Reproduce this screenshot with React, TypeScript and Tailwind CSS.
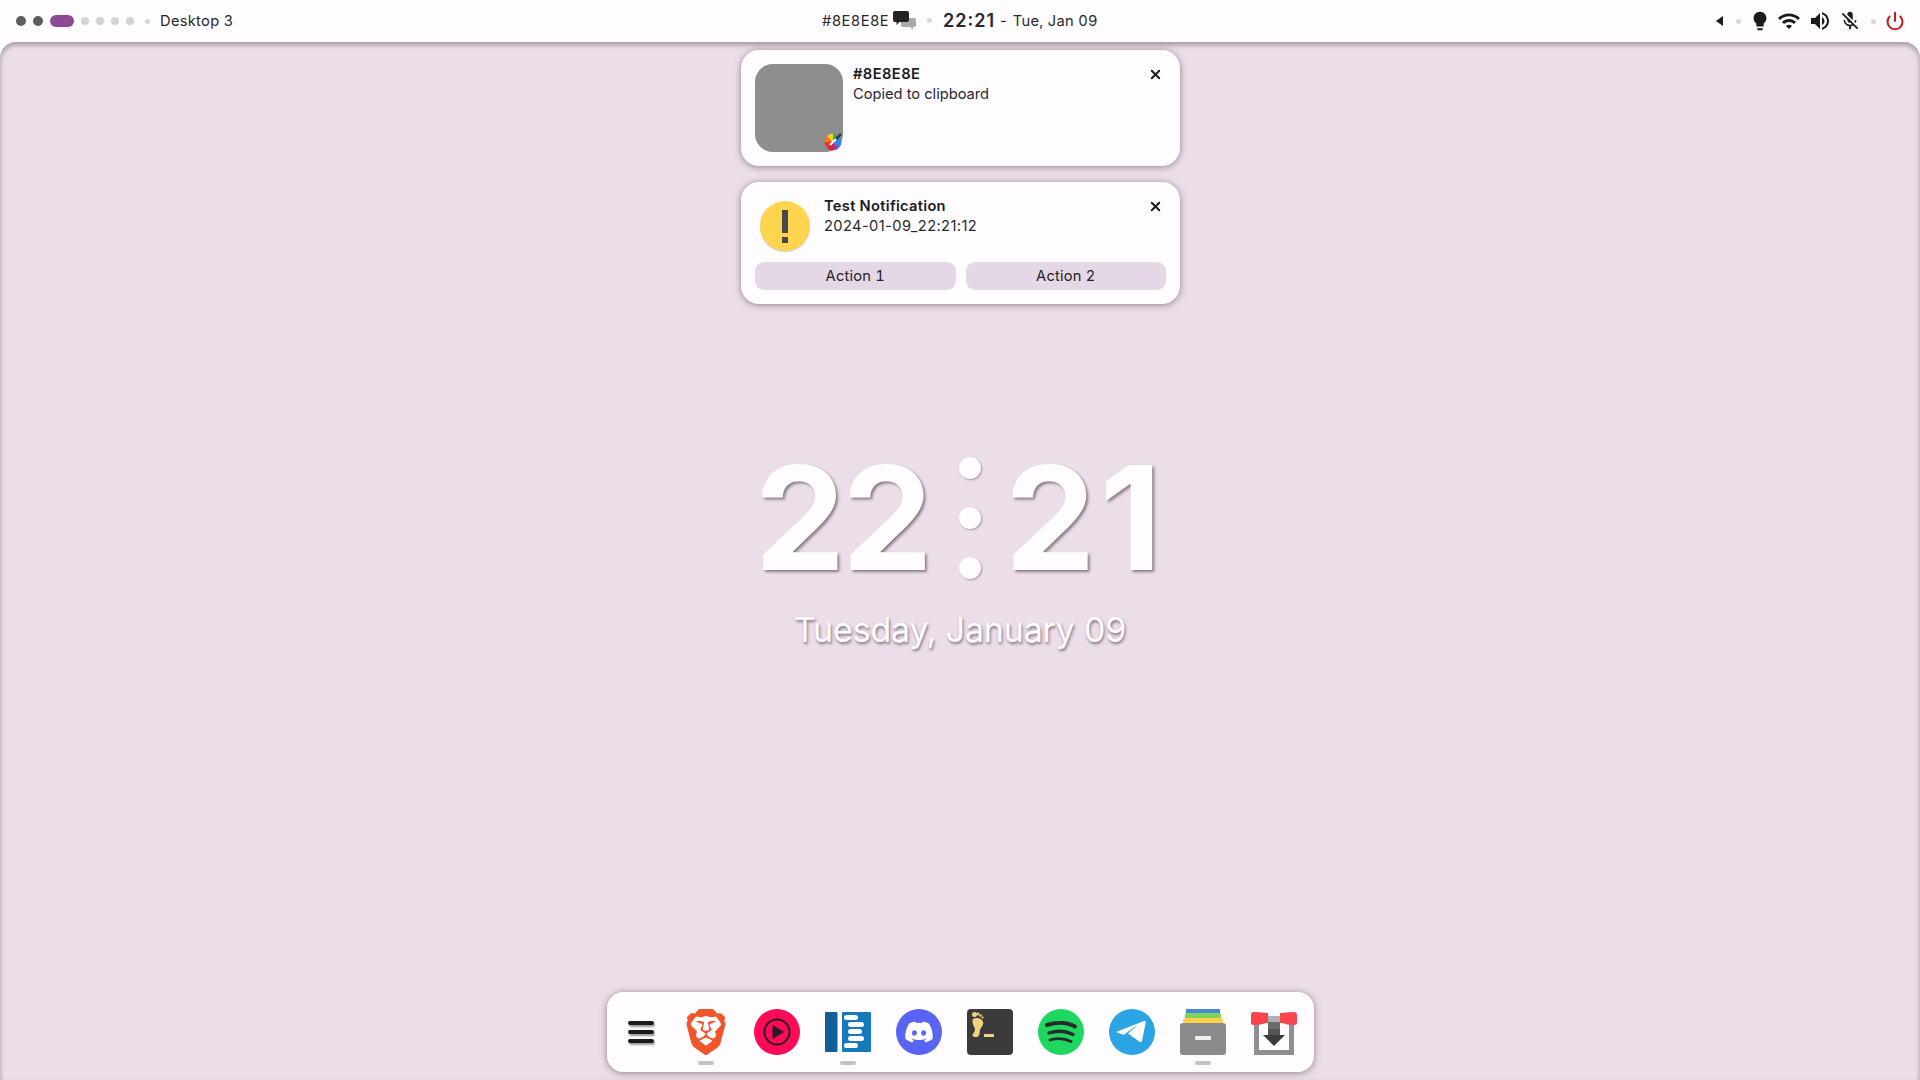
import { Power, X } from "lucide-react";
import { FaDiscord } from "react-icons/fa";
import { SiBrave } from "react-icons/si";
import {
  MdLightbulb,
  MdMicOff,
  MdVolumeUp,
  MdWifi,
} from "react-icons/md";

function Dot() {
  return <div className="h-[5px] w-[5px] rounded-full bg-[#d9d7d9]" />;
}

function Workspaces() {
  return (
    <div className="flex items-center">
      <div className="h-[10px] w-[10px] rounded-full bg-[#5e5c5e]" />
      <div className="ml-[7px] h-[10px] w-[10px] rounded-full bg-[#5e5c5e]" />
      <div className="ml-[7px] h-[12px] w-[24px] rounded-full bg-[#8c4a94]" />
      <div className="ml-[7px] h-[8px] w-[8px] rounded-full bg-[#d4d2d4]" />
      <div className="ml-[7px] h-[8px] w-[8px] rounded-full bg-[#d4d2d4]" />
      <div className="ml-[7px] h-[8px] w-[8px] rounded-full bg-[#d4d2d4]" />
      <div className="ml-[7px] h-[8px] w-[8px] rounded-full bg-[#d4d2d4]" />
      <div className="ml-[11px]">
        <Dot />
      </div>
      <span className="ml-[10px] mb-[1px] text-[14.67px] tracking-[0.3px] text-[#2a282a]">
        Desktop 3
      </span>
    </div>
  );
}

function ChatIcon() {
  return (
    <svg width="24" height="20" viewBox="0 0 24 20">
      <path
        d="M10 8h11a2 2 0 0 1 2 2v5a2 2 0 0 1-2 2h-1v2.500L17 17h-7a2 2 0 0 1-2-2v-5a2 2 0 0 1 2-2z"
        fill="#a9a7a9"
      />
      <path
        d="M2 1h12a2 2 0 0 1 2 2v7a2 2 0 0 1-2 2H6.500L3.500 15v-3H2a2 2 0 0 1-2-2V3a2 2 0 0 1 2-2z"
        fill="#242224"
      />
    </svg>
  );
}

function TopBar() {
  return (
    <header className="relative flex h-[42px] items-center justify-between pl-[16px] pr-[15px]">
      <Workspaces />
      <div className="absolute left-[822px] top-0 flex h-full items-center pb-[1px]">
        <span className="text-[14.67px] tracking-[0.4px] tabular-nums text-[#2a282a]">#8E8E8E</span>
        <div className="ml-[4px] mb-[2px]">
          <ChatIcon />
        </div>
        <div className="ml-[10px]">
          <Dot />
        </div>
        <span className="ml-[11px] text-[18px] font-semibold tracking-[1px] text-[#2a282a]">
          22∶21
        </span>
        <span className="ml-[5px] text-[14.67px] text-[#2a282a]">-</span>
        <span className="ml-[6px] text-[14.67px] tracking-[0.3px] tabular-nums text-[#2a282a]">
          Tue, Jan 09
        </span>
      </div>
      <div className="flex items-center text-[#1c1a1c]">
        <svg width="7" height="10" viewBox="0 0 7 10" className="mr-[13px]">
          <path d="M7 0v10L0 5z" fill="#1c1a1c" />
        </svg>
        <Dot />
        <MdLightbulb size={22} className="ml-[8px]" />
        <MdWifi size={24} className="ml-[6px]" />
        <MdVolumeUp size={24} className="ml-[7px]" />
        <MdMicOff size={22} className="ml-[7px]" />
        <div className="ml-[10px]">
          <Dot />
        </div>
        <Power size={20} strokeWidth={2.4} className="ml-[9px] text-[#c01c1c]" />
      </div>
    </header>
  );
}

function ColorPickerBadge() {
  return (
    <svg width="18" height="18" viewBox="0 0 18 18" className="absolute bottom-[1px] right-[1px]">
      <path d="M9 9L9 0.500A8.500 8.500 0 0 1 15 3z" fill="#33b45c" />
      <path d="M9 9L15 3A8.500 8.500 0 0 1 17.500 9z" fill="#3584e4" />
      <path d="M9 9L17.500 9A8.500 8.500 0 0 1 15 15z" fill="#3584e4" />
      <path d="M9 9L15 15A8.500 8.500 0 0 1 9 17.500z" fill="#9141ac" />
      <path d="M9 9L9 17.500A8.500 8.500 0 0 1 3 15z" fill="#e01b24" />
      <path d="M9 9L3 15A8.500 8.500 0 0 1 0.500 9z" fill="#ed333b" />
      <path d="M9 9L0.500 9A8.500 8.500 0 0 1 3 3z" fill="#ff7800" />
      <path d="M9 9L3 3A8.500 8.500 0 0 1 9 0.500z" fill="#f6d32d" />
      <path d="M6 12L12 6" stroke="#fff" strokeWidth="2" />
      <path d="M12 4l2 2M14 4l3-3" stroke="#3d3a3d" strokeWidth="2.500" />
    </svg>
  );
}

function CloseButton() {
  return <X size={15} strokeWidth={3} className="mr-[3px] mt-[3px] text-[#1c1a1c]" />;
}

function Notifications() {
  return (
    <div className="absolute left-[741px] top-[8px] flex w-[439px] flex-col gap-[16px]">
      <div className="flex h-[116px] rounded-[18px] bg-[#fefcff] p-[14px] shadow-[0_1px_7px_rgba(70,50,65,0.55)]">
        <div className="relative h-[88px] w-[88px] shrink-0 rounded-[18px] bg-[#8e8e8e]">
          <ColorPickerBadge />
        </div>
        <div className="ml-[10px] flex-1 text-[14.67px] leading-[20px] text-[#2a282a]">
          <div className="font-semibold tracking-[0.4px] tabular-nums text-[#1c1a1c]">#8E8E8E</div>
          <div>Copied to clipboard</div>
        </div>
        <CloseButton />
      </div>

      <div className="flex h-[122px] flex-col rounded-[18px] bg-[#fefcff] px-[14px] pt-[14px] shadow-[0_1px_7px_rgba(70,50,65,0.55)]">
        <div className="flex h-[66px]">
          <div className="ml-[5px] mt-[5px] flex h-[50px] w-[50px] shrink-0 flex-col items-center justify-center gap-[4px] rounded-full bg-[#ffd54f] shadow-[0_1px_1px_rgba(0,0,0,0.2)]">
            <div className="h-[23px] w-[6px] bg-[#4a474a]" />
            <div className="h-[6px] w-[6px] bg-[#4a474a]" />
          </div>
          <div className="ml-[14px] flex-1 text-[14.67px] leading-[20px] text-[#2a282a]">
            <div className="font-semibold tracking-[0.3px] text-[#1c1a1c]">Test Notification</div>
            <div className="tracking-[0.4px]">2024-01-09_22:21:12</div>
          </div>
          <CloseButton />
        </div>
        <div className="flex gap-[10px]">
          <div className="flex h-[28px] flex-1 items-center justify-center rounded-[9px] bg-[#e4d7e6] text-[14.67px] tracking-[0.2px] tabular-nums text-[#242224]">
            Action 1
          </div>
          <div className="flex h-[28px] flex-1 items-center justify-center rounded-[9px] bg-[#e4d7e6] text-[14.67px] tracking-[0.2px] tabular-nums text-[#242224]">
            Action 2
          </div>
        </div>
      </div>
    </div>
  );
}

function Clock() {
  return (
    <div className="flex flex-col items-center pt-[390px] text-[#fefcff]">
      <div className="flex h-[172px] items-center [text-shadow:2px_2px_3px_rgba(60,40,55,0.55)]">
        <span className="text-[144px] font-bold leading-none tracking-[-3px]">22</span>
        <div className="ml-[29px] mr-[24px] flex flex-col gap-[28px]">
          <div className="h-[22px] w-[22px] rounded-full bg-[#fefcff] shadow-[1px_1px_2px_rgba(60,40,55,0.4)]" />
          <div className="h-[22px] w-[22px] rounded-full bg-[#fefcff] shadow-[1px_1px_2px_rgba(60,40,55,0.4)]" />
          <div className="h-[22px] w-[22px] rounded-full bg-[#fefcff] shadow-[1px_1px_2px_rgba(60,40,55,0.4)]" />
        </div>
        <span className="text-[144px] font-bold leading-none tracking-[4px]">21</span>
      </div>
      <div className="mt-[4px] text-[34px] leading-[44px] tracking-[-0.2px] [text-shadow:1px_2px_3px_rgba(60,40,55,0.6)]">
        Tuesday, January 09
      </div>
    </div>
  );
}

function MusicIcon() {
  return (
    <svg width="46" height="46" viewBox="0 0 46 46">
      <circle cx="23" cy="23" r="23" fill="#ff0a55" />
      <circle cx="23" cy="23" r="12.500" fill="none" stroke="#2a1a24" strokeWidth="2" />
      <path d="M18.500 16L30 23L18.500 30z" fill="#2a1a24" />
    </svg>
  );
}

function SidebarIcon() {
  return (
    <svg width="46" height="46" viewBox="0 0 46 46">
      <rect x="0" y="3" width="12.500" height="40" rx="1" fill="#115f98" />
      <rect x="17" y="3" width="29" height="40" rx="1" fill="#1479bd" />
      <rect x="19" y="6" width="14" height="5" rx="2.500" fill="#fff" />
      <rect x="23" y="13" width="16" height="5" rx="2.500" fill="#fff" />
      <rect x="23" y="20" width="14" height="5" rx="2.500" fill="#fff" />
      <rect x="23" y="27" width="16" height="5" rx="2.500" fill="#fff" />
      <rect x="19" y="34" width="14" height="5" rx="2.500" fill="#fff" />
    </svg>
  );
}

function TerminalIcon() {
  return (
    <svg width="46" height="46" viewBox="0 0 46 46">
      <rect width="46" height="46" rx="4" fill="#3c3b3c" />
      <path
        d="M6 10c3-2 9-1 10 3c1 3-2 5-3 8c-.5 2 0 5-2 6.500c-2 1-5 .5-5.500-1c-.5-1 1-2 2-4c1-2.500 0-4-1-6c-1-2-1.500-5.500-.5-6.500z"
        fill="#f0d37f"
      />
      <circle cx="7.500" cy="5.500" r="2.500" fill="#f0d37f" />
      <circle cx="11" cy="5" r="1.400" fill="#f0d37f" />
      <circle cx="13.500" cy="6.500" r="1.200" fill="#f0d37f" />
      <circle cx="15.500" cy="8.500" r="1.100" fill="#f0d37f" />
      <rect x="17" y="25" width="10" height="3" fill="#f0d37f" />
    </svg>
  );
}

function SpotifyIcon() {
  return (
    <svg width="46" height="46" viewBox="0 0 46 46">
      <circle cx="23" cy="23" r="23" fill="#1ed760" />
      <path d="M9 16c9-3 20-3 28 1.500" fill="none" stroke="#2a2a2a" strokeWidth="4" strokeLinecap="round" />
      <path d="M11 24c8-2.500 17-2 24 1.500" fill="none" stroke="#2a2a2a" strokeWidth="3.400" strokeLinecap="round" />
      <path d="M12 31c7-2 15-1.500 21 1.500" fill="none" stroke="#2a2a2a" strokeWidth="2.800" strokeLinecap="round" />
    </svg>
  );
}

function TelegramIcon() {
  return (
    <svg width="46" height="46" viewBox="0 0 46 46">
      <circle cx="23" cy="23" r="23" fill="#2aa4e2" />
      <path
        d="M7 23L35 12c1-.4 2 .3 1.800 1.500L33 32c-.2 1.200-1.300 1.500-2.200.9L19 24.500l11-9.500L14.500 26z"
        fill="#fefcff"
      />
    </svg>
  );
}

function FilesIcon() {
  return (
    <svg width="46" height="46" viewBox="0 0 46 46">
      <path d="M8 -1h30a2 2 0 0 1 2 2v4H6V1a2 2 0 0 1 2-2z" fill="#4a86d8" />
      <rect x="5" y="4" width="36" height="7" rx="2" fill="#7ed35a" />
      <rect x="3" y="9" width="40" height="7" rx="2" fill="#ffd04f" />
      <rect x="0" y="14" width="46" height="32" rx="3" fill="#8b8b8b" />
      <rect x="15" y="27" width="16" height="4" rx="1" fill="#f0eef0" />
    </svg>
  );
}

function InstallerIcon() {
  return (
    <svg width="46" height="46" viewBox="0 0 46 46">
      <path d="M3 14h40v32H3z" fill="#8f8f8f" />
      <rect x="8" y="14" width="30" height="27" fill="#fefcff" />
      <path d="M0 6c0-2 1-3 3-3c6 0 10 1 12 1h16c2 0 6-1 12-1c2 0 3 1 3 3v8c0 1-1 2-3 2c-5 0-9-1-12-2H15c-3 1-7 2-12 2c-2 0-3-1-3-2z" fill="#f9444c" />
      <rect x="17" y="1" width="12" height="6" fill="#fefcff" />
      <rect x="17" y="7" width="12" height="6" fill="#b0b0b0" />
      <rect x="17" y="13" width="12" height="7" fill="#6b6b6b" />
      <rect x="17" y="20" width="12" height="6" fill="#555" />
      <path d="M12 26h22L23 37z" fill="#3c3c3c" />
    </svg>
  );
}

function Running() {
  return <div className="absolute bottom-[7px] h-[4px] w-[16px] rounded-full bg-[#c4c2c4]" />;
}

function Dock() {
  return (
    <div className="mb-[8px] mt-auto flex h-[80px] w-[707px] items-center rounded-[16px] bg-[#fefcff] pl-[4px] shadow-[0_1px_7px_rgba(70,50,65,0.55)]">
      <div className="flex w-[60px] shrink-0 flex-col items-center gap-[5px]">
        <div className="h-[4px] w-[26px] rounded-full bg-[#1c1a1c] shadow-[1px_2px_2px_rgba(0,0,0,0.4)]" />
        <div className="h-[4px] w-[26px] rounded-full bg-[#1c1a1c] shadow-[1px_2px_2px_rgba(0,0,0,0.4)]" />
        <div className="h-[4px] w-[26px] rounded-full bg-[#1c1a1c] shadow-[1px_2px_2px_rgba(0,0,0,0.4)]" />
      </div>
      <div className="relative flex h-full w-[71px] items-center justify-center">
        <SiBrave size={46} className="text-[#f1562b]" />
        <Running />
      </div>
      <div className="flex h-full w-[71px] items-center justify-center">
        <MusicIcon />
      </div>
      <div className="relative flex h-full w-[71px] items-center justify-center">
        <SidebarIcon />
        <Running />
      </div>
      <div className="flex h-full w-[71px] items-center justify-center">
        <div className="flex h-[46px] w-[46px] items-center justify-center rounded-full bg-[#5865f2]">
          <FaDiscord size={30} className="text-[#fefcff]" />
        </div>
      </div>
      <div className="flex h-full w-[71px] items-center justify-center">
        <TerminalIcon />
      </div>
      <div className="flex h-full w-[71px] items-center justify-center">
        <SpotifyIcon />
      </div>
      <div className="flex h-full w-[71px] items-center justify-center">
        <TelegramIcon />
      </div>
      <div className="relative flex h-full w-[71px] items-center justify-center">
        <FilesIcon />
        <Running />
      </div>
      <div className="flex h-full w-[71px] items-center justify-center">
        <InstallerIcon />
      </div>
    </div>
  );
}

export default function App() {
  return (
    <div className="flex h-[1080px] w-[1920px] flex-col overflow-hidden bg-[#fefcff] font-['Inter',sans-serif]">
      <TopBar />
      <main className="relative flex flex-1 flex-col items-center rounded-t-[16px] bg-[#ecdee9] shadow-[inset_0_3px_5px_rgba(60,40,55,0.4)]">
        <Notifications />
        <Clock />
        <Dock />
      </main>
    </div>
  );
}
